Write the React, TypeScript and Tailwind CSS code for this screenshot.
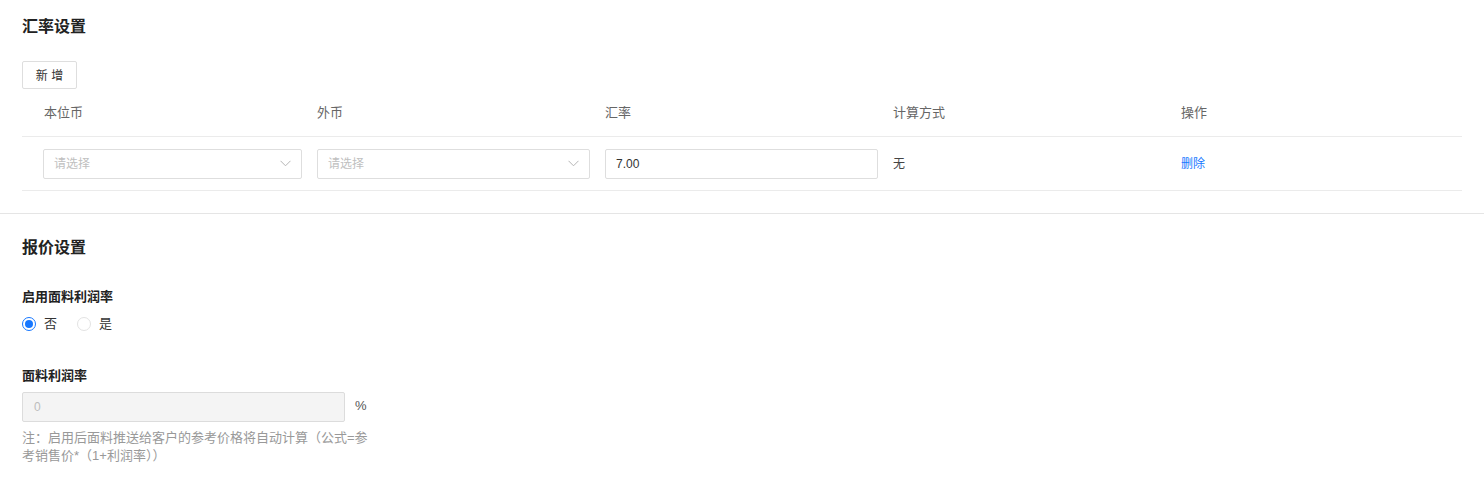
import React from "react";

const font = { fontFamily: '"Liberation Sans","Noto Sans CJK SC",sans-serif' };

function Chevron() {
  return (
    <svg width="11" height="7" viewBox="0 0 11 7" fill="none">
      <path d="M0.5 0.8 L5.5 5.8 L10.5 0.8" stroke="#b5b5b5" strokeWidth="1" />
    </svg>
  );
}

function Select() {
  return (
    <div className="flex h-[30px] w-full items-center justify-between rounded-[2px] border border-[#dedede] bg-white pl-[10px] pr-[10px]">
      <span className="text-[12px] text-[#c0c0c0]">请选择</span>
      <Chevron />
    </div>
  );
}

function Radio({ checked, label }: { checked?: boolean; label: string }) {
  return (
    <div className="flex items-center gap-[8px]">
      <span
        className={
          checked
            ? "flex h-[14px] w-[14px] items-center justify-center rounded-full border border-[#1677ff] bg-white"
            : "flex h-[14px] w-[14px] items-center justify-center rounded-full border border-[#e3e3e3] bg-white"
        }
      >
        {checked ? <span className="h-[8px] w-[8px] rounded-full bg-[#1677ff]" /> : null}
      </span>
      <span className="text-[13px] text-[#333]">{label}</span>
    </div>
  );
}

export default function App() {
  return (
    <div className="min-h-[478px] w-full bg-white text-[#333]" style={font}>
      <div className="px-[22px] pt-[16px]">
        <div className="h-[22px] text-[16px] font-bold leading-[22px] text-[#222]">汇率设置</div>
        <button className="mt-[23px] flex h-[28px] w-[55px] items-center justify-center rounded-[2px] border border-[#dedede] bg-white pt-[1px] text-[12px] text-[#333]">
          新&nbsp;增
        </button>
        <div className="grid grid-cols-[280px_288px_288px_288px_1fr]">
          <div className="flex h-[48px] items-center border-b border-[#ebebeb] pl-[22px] text-[13px] text-[#666]">本位币</div>
          <div className="flex h-[48px] items-center border-b border-[#ebebeb] pl-[15px] text-[13px] text-[#666]">外币</div>
          <div className="flex h-[48px] items-center border-b border-[#ebebeb] pl-[15px] text-[13px] text-[#666]">汇率</div>
          <div className="flex h-[48px] items-center border-b border-[#ebebeb] pl-[15px] text-[13px] text-[#666]">计算方式</div>
          <div className="flex h-[48px] items-center border-b border-[#ebebeb] pl-[15px] text-[13px] text-[#666]">操作</div>

          <div className="flex h-[54px] items-center border-b border-[#ebebeb] pl-[21px]">
            <Select />
          </div>
          <div className="flex h-[54px] items-center border-b border-[#ebebeb] pl-[15px]">
            <Select />
          </div>
          <div className="flex h-[54px] items-center border-b border-[#ebebeb] pl-[15px]">
            <div className="flex h-[30px] w-full items-center rounded-[2px] border border-[#dedede] bg-white pl-[10px] text-[12px] text-[#333]">
              7.00
            </div>
          </div>
          <div className="flex h-[54px] items-center border-b border-[#ebebeb] pl-[15px] text-[12px] text-[#444]">无</div>
          <div className="flex h-[54px] items-center border-b border-[#ebebeb] pl-[15px] text-[12px] text-[#1677ff]">删除</div>
        </div>
      </div>

      <div className="mt-[22px] border-t border-[#e5e5e5]" />

      <div className="px-[22px] pt-[23px]">
        <div className="h-[22px] text-[16px] font-bold leading-[22px] text-[#222]">报价设置</div>
        <div className="mt-[28px] h-[20px] text-[13px] font-bold leading-[20px] text-[#222]">启用面料利润率</div>
        <div className="mt-[7px] flex h-[20px] items-center gap-[20px]">
          <Radio checked label="否" />
          <Radio label="是" />
        </div>
        <div className="mt-[32px] h-[20px] text-[13px] font-bold leading-[20px] text-[#222]">面料利润率</div>
        <div className="mt-[6px] flex items-center gap-[10px]">
          <div className="flex h-[30px] w-[323px] items-center rounded-[2px] border border-[#dcdcdc] bg-[#f4f4f4] pl-[11px] text-[12px] text-[#bdbdbd]">
            0
          </div>
          <span className="pb-[3px] text-[13px] text-[#555]">%</span>
        </div>
        <div className="mt-[7px] text-[13px] leading-[18px] text-[#999]">
          <div className="whitespace-nowrap">注：启用后面料推送给客户的参考价格将自动计算（公式=参</div>
          <div className="whitespace-nowrap">考销售价*（1+利润率））</div>
        </div>
      </div>
    </div>
  );
}
